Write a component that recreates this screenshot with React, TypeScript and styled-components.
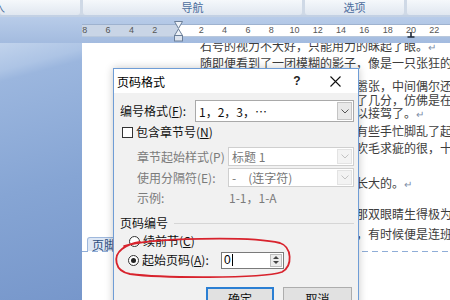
import React from "react";
import styled, { createGlobalStyle } from "styled-components";

const Global = createGlobalStyle`
  html, body { margin: 0; padding: 0; width: 450px; height: 300px; overflow: hidden; background: #fff; }
  body { font-family: "Noto Sans CJK SC", "Noto Sans", sans-serif; }
`;

const Screen = styled.div`
  position: relative;
  width: 450px;
  height: 300px;
  overflow: hidden;
  display: flex;
  flex-direction: column;
  font-family: "Noto Sans CJK SC", "Noto Sans", sans-serif;
`;

const TabsBar = styled.div`
  height: 15px;
  flex-shrink: 0;
  display: flex;
  gap: 3px;
  background: #cfd9e6;
`;

const Tab = styled.div<{ $w: number; $indent?: number }>`
  width: ${(p) => p.$w}px;
  flex-shrink: 0;
  height: 15px;
  background: linear-gradient(#f5f8fb, #e0e7f0);
  border-radius: 0 0 3px 3px;
  font-size: 11px;
  line-height: 14px;
  color: #4b6c9d;
  text-align: ${(p) => (p.$indent !== undefined ? "left" : "center")};
  text-indent: ${(p) => p.$indent ?? 0}px;
  overflow: hidden;
  white-space: nowrap;
`;

const Divider = styled.div`
  height: 2px;
  flex-shrink: 0;
  background: #c3d1e4;
`;

const RulerBand = styled.div`
  position: relative;
  height: 26px;
  flex-shrink: 0;
  box-sizing: border-box;
  padding: 7px 0 0 82px;
  background: linear-gradient(#b8cce9, #a3bbdf);
`;

const RulerStrip = styled.div`
  display: flex;
  height: 11px;
  border-top: 1px solid #9eb2cf;
  border-bottom: 1px solid #b9c8dc;
`;

const RulerMargin = styled.div`
  width: 96px;
  flex-shrink: 0;
  box-sizing: border-box;
  display: flex;
  justify-content: flex-end;
  padding-right: 11.65px;
  background: #c9d5e6;
`;

const RulerBody = styled.div`
  flex: 1;
  display: flex;
  padding-left: 11.65px;
  background: #fff;
  overflow: hidden;
`;

const RulerNum = styled.span`
  width: 23.3px;
  flex-shrink: 0;
  text-align: center;
  font-family: "Liberation Sans", Arial, sans-serif;
  font-size: 9px;
  line-height: 11px;
  color: #555;
`;

const IndentMarker = styled.svg`
  position: absolute;
  left: 174px;
  top: 4px;
`;

const TabStop = styled.svg`
  position: absolute;
  left: 407px;
  top: 15px;
`;

const Workspace = styled.div`
  flex: 1;
  min-height: 0;
  display: flex;
`;

const LeftPane = styled.div`
  width: 82px;
  flex-shrink: 0;
  background: linear-gradient(165deg, #c1d3ec 0%, #adc4e5 10%, #9bb6de 14%, #86a5d4 55%, #7797cb 100%);
`;

const Page = styled.div`
  flex: 1;
  background: #fff;
  overflow: hidden;
  display: flex;
  flex-direction: column;
`;

const DocLine = styled.div<{ $mt: number }>`
  height: 14px;
  flex-shrink: 0;
  margin-top: ${(p) => p.$mt}px;
  padding-left: 118px;
  font-size: 12px;
  line-height: 14px;
  white-space: nowrap;
  color: #3d3d3d;
`;

const ParaMark = styled.span`
  color: #7d8ea8;
  font-size: 10px;
`;

const FooterLine = styled.div<{ $mt: number }>`
  position: relative;
  flex-shrink: 0;
  height: 1px;
  margin-top: ${(p) => p.$mt}px;
  background: repeating-linear-gradient(to right, #8fadd7 0 6px, transparent 6px 10px);
`;

const FooterTab = styled.div`
  position: absolute;
  left: 5px;
  bottom: 1px;
  width: 60px;
  height: 14px;
  box-sizing: border-box;
  padding-left: 4px;
  background: #dde7f5;
  border: 1px solid #9fb8dc;
  border-bottom: 0;
  border-radius: 3px 3px 0 0;
  font-size: 12px;
  line-height: 13px;
  color: #2e4f80;
  white-space: nowrap;
`;

const Dialog = styled.div`
  position: absolute;
  left: 113px;
  top: 68px;
  width: 246px;
  height: 250px;
  box-sizing: border-box;
  border: 1px solid #6f9dd6;
  background: #f1f1f1;
  box-shadow: 0 0 8px rgba(0, 0, 0, 0.22);
  display: flex;
  flex-direction: column;
`;

const TitleBar = styled.div`
  height: 24px;
  flex-shrink: 0;
  display: flex;
  align-items: center;
  background: #fff;
`;

const Title = styled.div`
  flex: 1;
  padding-left: 3px;
  font-size: 12px;
  color: #000;
`;

const TitleButton = styled.div<{ $w: number }>`
  width: ${(p) => p.$w}px;
  height: 24px;
  display: flex;
  align-items: center;
  justify-content: center;
  font-family: "Liberation Sans", Arial, sans-serif;
  font-size: 12px;
  font-weight: bold;
  color: #222;
`;

const Body = styled.div`
  display: flex;
  flex-direction: column;
  padding: 7px 4px 0 6px;
`;

const Row = styled.div<{ $h: number; $mt?: number; $indent?: number }>`
  display: flex;
  align-items: center;
  height: ${(p) => p.$h}px;
  margin-top: ${(p) => p.$mt ?? 0}px;
  padding-left: ${(p) => p.$indent ?? 0}px;
  flex-shrink: 0;
`;

const Label = styled.span<{ $w?: number; $muted?: boolean; $ml?: number }>`
  ${(p) => (p.$w ? `width: ${p.$w}px; flex-shrink: 0;` : "")}
  margin-left: ${(p) => p.$ml ?? 0}px;
  font-size: 12px;
  line-height: 16px;
  white-space: nowrap;
  color: ${(p) => (p.$muted ? "#7b7b7b" : "#111")};
`;

const Acc = styled.span`
  text-decoration: underline;
`;

const Select = styled.div<{ $w: number; $h: number; $disabled?: boolean }>`
  width: ${(p) => p.$w}px;
  height: ${(p) => p.$h}px;
  box-sizing: border-box;
  flex-shrink: 0;
  display: flex;
  align-items: stretch;
  border: 1px solid ${(p) => (p.$disabled ? "#cfcfcf" : "#a9a9a9")};
  background: #fff;
`;

const SelectText = styled.span<{ $disabled?: boolean }>`
  flex: 1;
  padding-left: 3px;
  display: flex;
  align-items: center;
  font-size: 12px;
  white-space: nowrap;
  color: ${(p) => (p.$disabled ? "#777" : "#111")};
`;

const ArrowBox = styled.span<{ $disabled?: boolean }>`
  width: 15px;
  margin: 1px;
  display: flex;
  align-items: center;
  justify-content: center;
  box-sizing: border-box;
  border: 1px solid ${(p) => (p.$disabled ? "#e3e3e3" : "#c4c4c4")};
  background: ${(p) => (p.$disabled ? "#f3f3f3" : "#e9e9e9")};
`;

const Checkbox = styled.span`
  width: 11px;
  height: 11px;
  margin-left: 2px;
  box-sizing: border-box;
  border: 1px solid #333;
  background: #fff;
  flex-shrink: 0;
`;

const Radio = styled.span<{ $checked?: boolean }>`
  width: 11px;
  height: 11px;
  box-sizing: border-box;
  border-radius: 50%;
  border: 1px solid #333;
  background: #fff;
  flex-shrink: 0;
  display: flex;
  align-items: center;
  justify-content: center;
  &::after {
    content: "";
    width: 5px;
    height: 5px;
    border-radius: 50%;
    background: ${(p) => (p.$checked ? "#222" : "transparent")};
  }
`;

const SectionLine = styled.span`
  flex: 1;
  height: 1px;
  margin-left: 6px;
  background: #d6d6d6;
`;

const NumberInput = styled.div`
  width: 63px;
  height: 17px;
  box-sizing: border-box;
  display: flex;
  border: 1px solid #7a7a7a;
  background: #fff;
`;

const InputText = styled.span`
  flex: 1;
  display: flex;
  align-items: center;
  padding-left: 2px;
  font-family: "Liberation Sans", Arial, sans-serif;
  font-size: 12px;
  color: #000;
`;

const Caret = styled.span`
  width: 1px;
  height: 12px;
  margin-left: 1px;
  background: #000;
`;

const Spinner = styled.span`
  width: 12px;
  margin: 1px;
  display: flex;
  flex-direction: column;
  align-items: center;
  justify-content: space-around;
  box-sizing: border-box;
  border: 1px solid #bdbdbd;
  background: #ececec;
`;

const ButtonRow = styled.div`
  display: flex;
  justify-content: flex-end;
  gap: 9px;
  margin-top: 18px;
  padding-right: 2px;
`;

const Button = styled.div<{ $primary?: boolean; $w: number }>`
  width: ${(p) => p.$w}px;
  height: 23px;
  box-sizing: border-box;
  display: flex;
  align-items: center;
  justify-content: center;
  background: #e1e1e1;
  border: ${(p) => (p.$primary ? "2px solid #2b7fd3" : "1px solid #adadad")};
  font-size: 12px;
  color: #111;
`;

const Annotation = styled.svg`
  position: absolute;
  left: 112px;
  top: 234px;
  pointer-events: none;
`;

const Chevron: React.FC<{ color: string }> = ({ color }) => (
  <svg width="8" height="5" viewBox="0 0 8 5">
    <polyline points="0.5,0.5 4,4 7.5,0.5" fill="none" stroke={color} strokeWidth="1" />
  </svg>
);

const Mark = () => <ParaMark>↵</ParaMark>;

const leftNums = ["8", "6", "4", "2"];
const rightNums = ["2", "4", "6", "8", "10", "12", "14", "16", "18", "20", "22", "24"];

const lines: { mt: number; text: string; mark?: boolean }[] = [
  { mt: -4, text: "石号的视力不大好，只能用力的眯起了眼。", mark: true },
  { mt: 3, text: "随即便看到了一团模糊的影子，像是一只张狂的" },
  { mt: 9, text: "那影子的动作很大，显得气焰嚣张，中间偶尔还夹杂着" },
  { mt: 0, text: "声音，听着倒是比方才更清醒了几分，仿佛是在等人" },
  { mt: -1, text: "候着什么人，好随时准备着可以接驾了。", mark: true },
  { mt: 4, text: "她一时间愣住了，手上动作也有些手忙脚乱了起来，" },
  { mt: 3, text: "那人向来挑剔，对什么都是很吹毛求疵的很，十分" },
  { mt: 21, text: "这孩子原本就是在她眼皮底下长大的。", mark: true },
  { mt: 17, text: "她记得清清楚楚，少年时候的那双眼睛生得极为好看" },
  { mt: 6, text: "眼尾微微上挑，笑起来很勾人，有时候便是连班主任也" },
];

export default function App() {
  return (
    <Screen>
      <Global />
      <TabsBar>
        <Tab $w={80} $indent={-6}>入</Tab>
        <Tab $w={219}>导航</Tab>
        <Tab $w={99}>选项</Tab>
        <Tab $w={60} />
      </TabsBar>
      <Divider />
      <RulerBand>
        <RulerStrip>
          <RulerMargin>
            {leftNums.map((n, i) => (
              <RulerNum key={i}>{n}</RulerNum>
            ))}
          </RulerMargin>
          <RulerBody>
            {rightNums.map((n, i) => (
              <RulerNum key={i}>{n}</RulerNum>
            ))}
          </RulerBody>
        </RulerStrip>
        <IndentMarker width="9" height="21" viewBox="0 0 9 21">
          <polygon points="0.5,0.5 8.5,0.5 4.5,7.5" fill="#eef2f7" stroke="#6b7f99" strokeWidth="1" />
          <polygon points="4.5,8 0.5,14.5 8.5,14.5" fill="#eef2f7" stroke="#6b7f99" strokeWidth="1" />
          <rect x="0.5" y="14.5" width="8" height="5.5" fill="#dde4ee" stroke="#6b7f99" strokeWidth="1" />
        </IndentMarker>
        <TabStop width="8" height="6" viewBox="0 0 8 6">
          <path d="M4 0 V5 M0.5 5 H7.5" stroke="#1e2a3a" strokeWidth="1.6" fill="none" />
        </TabStop>
      </RulerBand>
      <Workspace>
        <LeftPane />
        <Page>
          {lines.map((l, i) => (
            <DocLine key={i} $mt={l.mt}>
              {l.text}
              {l.mark && <Mark />}
            </DocLine>
          ))}
          <FooterLine $mt={10}>
            <FooterTab>页脚 -第1节-</FooterTab>
          </FooterLine>
        </Page>
      </Workspace>

      <Dialog>
        <TitleBar>
          <Title>页码格式</Title>
          <TitleButton $w={30}>?</TitleButton>
          <TitleButton $w={46}>
            <svg width="11" height="11" viewBox="0 0 11 11">
              <path d="M0.5 0.5 L10.5 10.5 M10.5 0.5 L0.5 10.5" stroke="#111" strokeWidth="1.1" />
            </svg>
          </TitleButton>
        </TitleBar>
        <Body>
          <Row $h={22}>
            <Label $w={75}>
              编号格式(<Acc>F</Acc>):
            </Label>
            <Select $w={159} $h={22}>
              <SelectText>1，2，3，…</SelectText>
              <ArrowBox>
                <Chevron color="#555" />
              </ArrowBox>
            </Select>
          </Row>
          <Row $h={20}>
            <Checkbox />
            <Label $ml={3}>
              包含章节号(<Acc>N</Acc>)
            </Label>
          </Row>
          <Row $h={19} $mt={5} $indent={17}>
            <Label $w={91} $muted>
              章节起始样式(P)
            </Label>
            <Select $w={126} $h={19} $disabled>
              <SelectText $disabled>标题 1</SelectText>
              <ArrowBox $disabled>
                <Chevron color="#c2c2c2" />
              </ArrowBox>
            </Select>
          </Row>
          <Row $h={19} $mt={2} $indent={17}>
            <Label $w={91} $muted>
              使用分隔符(E):
            </Label>
            <Select $w={126} $h={19} $disabled>
              <SelectText $disabled>-　(连字符)</SelectText>
              <ArrowBox $disabled>
                <Chevron color="#c2c2c2" />
              </ArrowBox>
            </Select>
          </Row>
          <Row $h={18} $mt={2} $indent={17}>
            <Label $w={92} $muted>
              示例:
            </Label>
            <Label $muted>1-1，1-A</Label>
          </Row>
          <Row $h={18} $mt={7}>
            <Label>页码编号</Label>
            <SectionLine />
          </Row>
          <Row $h={18} $indent={9}>
            <Radio />
            <Label $ml={3}>
              续前节(<Acc>C</Acc>)
            </Label>
          </Row>
          <Row $h={18} $mt={1} $indent={8}>
            <Radio $checked />
            <Label $ml={3} $w={79}>
              起始页码(<Acc>A</Acc>):
            </Label>
            <NumberInput>
              <InputText>
                0<Caret />
              </InputText>
              <Spinner>
                <svg width="6" height="3" viewBox="0 0 6 3">
                  <polygon points="3,0 6,3 0,3" fill="#444" />
                </svg>
                <svg width="6" height="3" viewBox="0 0 6 3">
                  <polygon points="0,0 6,0 3,3" fill="#444" />
                </svg>
              </Spinner>
            </NumberInput>
          </Row>
          <ButtonRow>
            <Button $primary $w={68}>
              确定
            </Button>
            <Button $w={69}>取消</Button>
          </ButtonRow>
        </Body>
      </Dialog>

      <Annotation width="184" height="48" viewBox="0 0 184 48">
        <path
          d="M12 12 C38 4, 138 2, 168 9 C180 13, 181 32, 170 38 C148 45, 48 44, 18 40 C2 37, 1 22, 10 15 C14 12, 20 9, 28 8"
          fill="none"
          stroke="#d8232d"
          strokeWidth="1.8"
          strokeLinecap="round"
        />
      </Annotation>
    </Screen>
  );
}
